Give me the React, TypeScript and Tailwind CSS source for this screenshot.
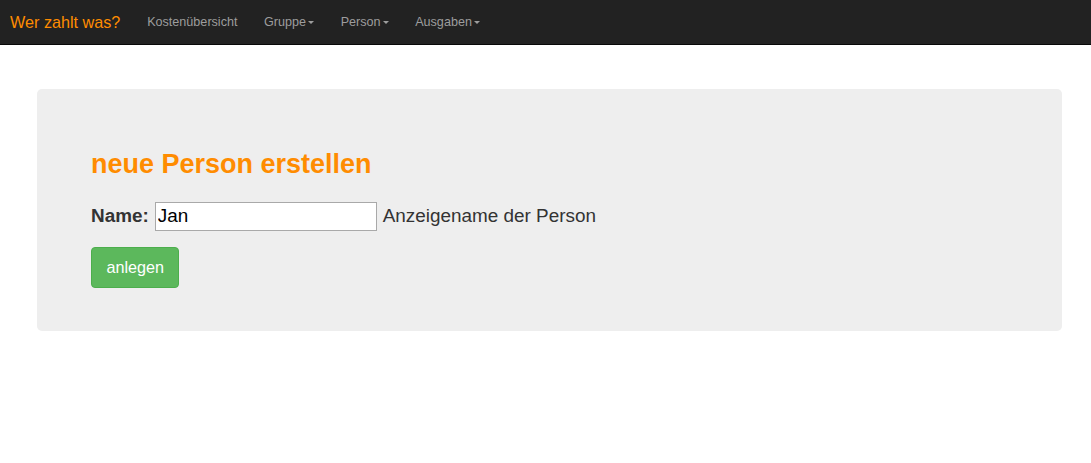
import { useState } from "react";

const Caret = () => (
  <span className="ml-[2px] inline-block h-0 w-0 border-x-[3.4px] border-t-[3.6px] border-x-transparent border-t-current align-middle" />
);

const NavLink = ({ label, dropdown }: { label: string; dropdown?: boolean }) => (
  <a href="#" className="flex h-full items-center px-[13.3px] text-[12.6px] text-[#9d9d9d] hover:text-white">
    {label}
    {dropdown && <Caret />}
  </a>
);

const App = () => {
  const [name, setName] = useState("Jan");

  return (
    <div className="min-h-screen bg-white font-['Liberation_Sans',Arial,sans-serif] text-[#333]">
      <nav className="flex h-[45px] items-stretch border-b border-[#080808] bg-[#222]">
        <a href="#" className="flex items-center pl-[10px] pr-[13.5px] text-[16.2px] text-[#ff8c00]">
          Wer zahlt was?
        </a>
        <NavLink label="Kostenübersicht" />
        <NavLink label="Gruppe" dropdown />
        <NavLink label="Person" dropdown />
        <NavLink label="Ausgaben" dropdown />
      </nav>

      <div className="pl-[37px] pr-[29px] pt-[44px]">
        <div className="rounded-[5px] bg-[#eee] px-[54px] pb-[43px] pt-[61px]">
          <h2 className="text-[27px] font-bold leading-[1.1] text-[#ff8c00]">neue Person erstellen</h2>
          <form className="flex flex-col" onSubmit={(e) => e.preventDefault()}>
            <div className="mt-[22px] flex h-[29px] items-center text-[18.9px]">
              <label htmlFor="name" className="font-bold">Name:</label>
              <input
                id="name"
                value={name}
                onChange={(e) => setName(e.target.value)}
                className="ml-[6px] h-[29px] w-[222px] border border-[#a9a9a9] bg-white px-[2px] text-[18.9px] text-black outline-none"
              />
              <span className="ml-[6px]">Anzeigename der Person</span>
            </div>
            <div className="mt-[16px]">
              <button
                type="submit"
                className="rounded-[4px] border border-[#4cae4c] bg-[#5cb85c] px-[14.4px] py-[9px] text-[16.2px] leading-[1.3333] text-white"
              >
                anlegen
              </button>
            </div>
          </form>
        </div>
      </div>
    </div>
  );
};

export default App;
